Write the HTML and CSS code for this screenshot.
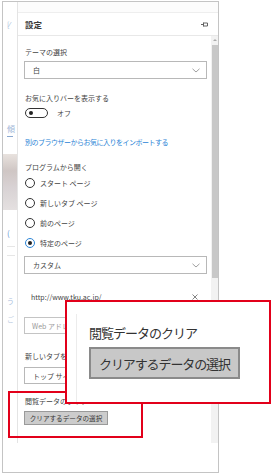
FILE: index.html
```html
<!DOCTYPE html>
<html lang="ja">
<head>
<meta charset="utf-8">
<link rel="stylesheet" href="styles.css">
</head>
<body>
<div class="frame">
  <div class="strip">
    <div class="bg-a">[⁄</div>
    <div class="bg-b">傾</div>
    <div class="bg-dash"></div>
    <div class="bg-photo"></div>
    <div class="bg-c">(</div>
    <div class="bg-line"></div>
    <div class="bg-line"></div>
    <div class="bg-d">う</div>
    <div class="bg-e">ご</div>
  </div>
  <div class="panel">
    <div class="topbar"></div>
    <div class="header">
      <span class="title">設定</span>
      <svg class="pin" width="7" height="5" viewBox="0 0 7 5"><path d="M0 2.5H2.5M2.5 0.5V4.5M2.5 1H6.5V4H2.5" fill="none" stroke="#555" stroke-width="0.9"/></svg>
    </div>
    <div class="body">
      <div class="content">
        <div class="label first">テーマの選択</div>
        <div class="select"><span>白</span><svg class="chev" width="8" height="5" viewBox="0 0 8 5"><path d="M0.5 0.8L4 4L7.5 0.8" fill="none" stroke="#888" stroke-width="0.8"/></svg></div>
        <div class="label l2">お気に入りバーを表示する</div>
        <div class="toggle-row"><span class="toggle"><span class="dot"></span></span><span class="toggle-text">オフ</span></div>
        <div class="label link">別のブラウザーからお気に入りをインポートする</div>
        <div class="label l4">プログラムから開く</div>
        <div class="radios">
          <div class="radio"><span class="circle"></span>スタート ページ</div>
          <div class="radio"><span class="circle"></span>新しいタブ ページ</div>
          <div class="radio"><span class="circle"></span>前のページ</div>
          <div class="radio"><span class="circle on"><span class="inner"></span></span>特定のページ</div>
        </div>
        <div class="select s2"><span>カスタム</span><svg class="chev" width="8" height="5" viewBox="0 0 8 5"><path d="M0.5 0.8L4 4L7.5 0.8" fill="none" stroke="#888" stroke-width="0.8"/></svg></div>
        <div class="url-row"><span>http://www.tku.ac.jp/</span><svg class="x" width="6" height="6" viewBox="0 0 6 6"><path d="M0.5 0.5L5.5 5.5M5.5 0.5L0.5 5.5" stroke="#666" stroke-width="0.8"/></svg></div>
        <div class="input">Web アドレスを入力</div>
        <div class="label l5">新しいタブを開く方法</div>
        <div class="select s3"><span>トップ サイト</span></div>
        <div class="label l6">閲覧データのクリア</div>
        <div class="btn">クリアするデータの選択</div>
      </div>
      <div class="scrollbar">
        <div class="arrow"></div>
        <div class="thumb"></div>
      </div>
    </div>
  </div>
</div>
<div class="callout-small"></div>
<div class="callout-big">
  <div class="big-edge"></div>
  <div class="big-title">閲覧データのクリア</div>
  <div class="big-btn">クリアするデータの選択</div>
</div>
</body>
</html>
```
FILE: styles.css
```css
html, body {
  margin: 0;
  padding: 0;
  background: #fff;
}
body {
  width: 271px;
  height: 474px;
  position: relative;
  overflow: hidden;
  font-family: "Noto Sans CJK JP", "Noto Sans", sans-serif;
  color: #333;
}
.frame {
  margin: 1px 0 0 2px;
  width: 215px;
  height: 470px;
  border: 1px solid #c4c4c4;
  display: flex;
  background: #fff;
}
.strip {
  width: 14px;
  position: relative;
  display: flex;
  flex-direction: column;
  align-items: flex-start;
  padding-left: 4px;
  box-sizing: border-box;
}
.bg-a {
  margin-top: 17px;
  font-size: 7px;
  line-height: 10px;
  color: #9fb8d8;
}
.bg-b {
  margin-top: 95px;
  font-size: 8px;
  line-height: 10px;
  color: #9fb8d8;
}
.bg-dash {
  margin-top: 2px;
  width: 6px;
  height: 1px;
  background: #8aa8d0;
}
.bg-photo {
  margin: 17px 0 0 -4px;
  width: 14px;
  height: 56px;
  background: linear-gradient(180deg, #e8e2de 0%, #cfc6c4 30%, #d8d2d4 60%, #e4e0e0 100%);
}
.bg-c {
  margin-top: 18px;
  font-size: 8px;
  line-height: 10px;
  color: #5d8fd0;
}
.bg-line {
  margin-top: 8px;
  width: 8px;
  height: 1px;
  background: #e6e6e6;
}
.bg-d {
  margin-top: 40px;
  font-size: 7px;
  line-height: 10px;
  color: #a9bedc;
}
.bg-e {
  margin-top: 8px;
  font-size: 7px;
  line-height: 10px;
  color: #c2d0e4;
}
.panel {
  width: 201px;
  border-left: 1px solid #e4e4e4;
  box-sizing: border-box;
  height: 441px;
  display: flex;
  flex-direction: column;
}
.topbar {
  height: 10px;
  border-bottom: 1px solid #eeeeee;
  background: #fcfcfc;
}
.header {
  height: 22px;
  border-bottom: 1px solid #e8e8e8;
  display: flex;
  align-items: center;
  justify-content: space-between;
  padding: 0 10px 0 7px;
}
.title {
  font-size: 8.5px;
  font-weight: bold;
  color: #3a3a3a;
  line-height: 10px;
}
.pin {
  display: block;
}
.body {
  flex: 1;
  display: flex;
}
.content {
  flex: 1;
  padding: 11px 4px 0 6px;
  display: flex;
  flex-direction: column;
  align-items: flex-start;
  font-size: 7px;
}
.label {
  line-height: 10px;
  height: 10px;
  font-size: 7px;
  color: #444;
  white-space: nowrap;
  margin-left: 1px;
}
.select {
  margin-top: 4px;
  width: 183px;
  height: 18px;
  border: 1px solid #b8b8b8;
  box-sizing: border-box;
  display: flex;
  align-items: center;
  justify-content: space-between;
  padding: 0 6px 0 8px;
  font-size: 7px;
  color: #444;
}
.chev {
  display: block;
}
.l2 { margin-top: 14px; }
.toggle-row {
  margin-top: 5px;
  display: flex;
  align-items: center;
  height: 10px;
  margin-left: 1px;
}
.toggle {
  width: 23px;
  height: 10px;
  border: 1.3px solid #333;
  border-radius: 6px;
  box-sizing: border-box;
  display: flex;
  align-items: center;
  padding-left: 3px;
}
.dot {
  width: 4px;
  height: 4px;
  border-radius: 50%;
  background: #222;
}
.toggle-text {
  margin-left: 9px;
  font-size: 7px;
  line-height: 10px;
  color: #444;
}
.link {
  margin-top: 19px;
  color: #2b84d6;
  letter-spacing: -0.5px;
}
.l4 { margin-top: 15px; }
.radios {
  margin-top: 5px;
  display: flex;
  flex-direction: column;
  gap: 8px;
  margin-left: 1px;
}
.radio {
  height: 12px;
  display: flex;
  align-items: center;
  font-size: 7px;
  color: #444;
  white-space: nowrap;
}
.circle {
  width: 10px;
  height: 10px;
  border: 1.3px solid #333;
  border-radius: 50%;
  box-sizing: border-box;
  margin-right: 5px;
  display: flex;
  align-items: center;
  justify-content: center;
}
.circle.on {
  border-color: #2b84d6;
}
.inner {
  width: 4px;
  height: 4px;
  border-radius: 50%;
  background: #222;
}
.s2 { margin-top: 7px; }
.url-row {
  margin-top: 18px;
  width: 183px;
  height: 10px;
  display: flex;
  align-items: center;
  justify-content: space-between;
  padding: 0 9px 0 7px;
  box-sizing: border-box;
  font-size: 7px;
  color: #444;
}
.x { display: block; }
.input {
  margin-top: 15px;
  width: 183px;
  height: 17px;
  border: 1px solid #c4c4c4;
  box-sizing: border-box;
  display: flex;
  align-items: center;
  padding-left: 7px;
  font-size: 7px;
  color: #999;
}
.l5 { margin-top: 17px; }
.s3 { margin-top: 6px; height: 17px; }
.l6 { margin-top: 12px; }
.btn {
  margin-top: 5px;
  width: 84px;
  height: 14px;
  background: #cccccc;
  border: 1px solid #9a9a9a;
  box-sizing: border-box;
  display: flex;
  align-items: center;
  justify-content: center;
  font-size: 6.6px;
  color: #333;
  white-space: nowrap;
}
.scrollbar {
  width: 7px;
  background: #f2f2f2;
  display: flex;
  flex-direction: column;
  align-items: center;
}
.arrow {
  margin-top: 3px;
  width: 0;
  height: 0;
  border-left: 2px solid transparent;
  border-right: 2px solid transparent;
  border-bottom: 2px solid #aaa;
}
.thumb {
  margin-top: 4px;
  width: 6px;
  height: 233px;
  background: #c8c8c8;
}
.callout-small {
  position: absolute;
  left: 8px;
  top: 391px;
  width: 135px;
  height: 47px;
  border: 2px solid #e2001a;
  box-sizing: border-box;
}
.callout-big {
  position: absolute;
  left: 65px;
  top: 300px;
  width: 206px;
  height: 104px;
  border: 2px solid #e2001a;
  box-sizing: border-box;
  background: #fff;
  padding: 22px 0 0 22px;
}
.big-edge {
  position: absolute;
  left: 9px;
  top: 12px;
  bottom: 0;
  border-left: 1px solid #ececec;
}
.big-title {
  font-size: 13px;
  letter-spacing: -1px;
  line-height: 18px;
  color: #333;
  white-space: nowrap;
}
.big-btn {
  margin-top: 5px;
  width: 151px;
  height: 32px;
  background: #c8c8c8;
  border: 2px solid #8a8a8a;
  box-sizing: border-box;
  display: flex;
  align-items: center;
  padding-left: 8px;
  font-size: 13px;
  letter-spacing: -1.1px;
  color: #333;
  white-space: nowrap;
}
```
